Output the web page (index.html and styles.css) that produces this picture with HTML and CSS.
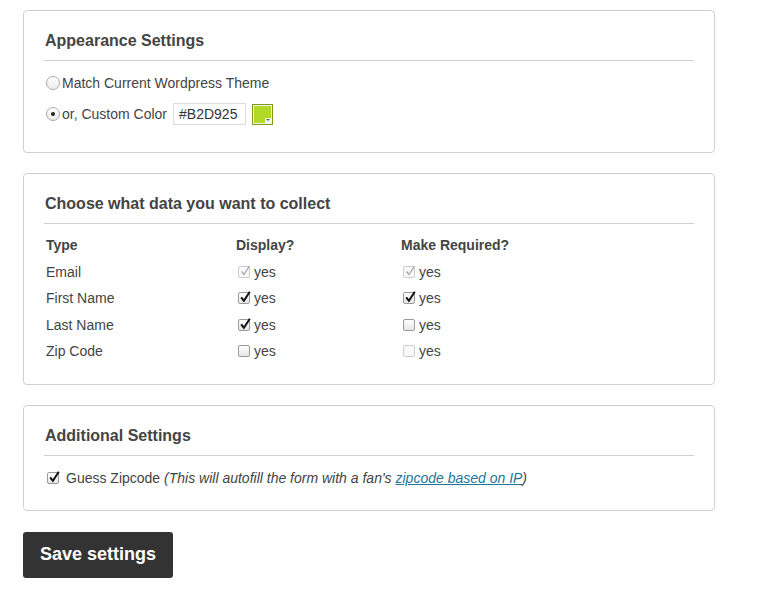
FILE: index.html
```html
<!DOCTYPE html>
<html>
<head>
<meta charset="utf-8">
<link rel="stylesheet" href="styles.css">
</head>
<body>
<div class="page">
  <section class="panel">
    <h2 class="panel-title">Appearance Settings</h2>
    <div class="panel-body">
      <label class="radio-row"><span class="radio"></span>Match Current Wordpress Theme</label>
      <label class="radio-row row2"><span class="radio on"><span class="dot"></span></span>or, Custom Color <span class="color-input">#B2D925</span><span class="swatch"><span class="swatch-fill"></span><span class="swatch-arrow"></span></span></label>
    </div>
  </section>

  <section class="panel">
    <h2 class="panel-title">Choose what data you want to collect</h2>
    <div class="grid">
      <div class="th">Type</div><div class="th">Display?</div><div class="th">Make Required?</div>
      <div class="td">Email</div>
      <div class="td"><span class="cb dis"><svg viewBox="0 0 14 14" width="14" height="14"><path d="M3.5 7.5 L6 10.5 L11.5 2" fill="none" stroke="#a6a6a6" stroke-width="1.3"/></svg></span>yes</div>
      <div class="td"><span class="cb dis"><svg viewBox="0 0 14 14" width="14" height="14"><path d="M3.5 7.5 L6 10.5 L11.5 2" fill="none" stroke="#a6a6a6" stroke-width="1.3"/></svg></span>yes</div>
      <div class="td">First Name</div>
      <div class="td"><span class="cb"><svg viewBox="0 0 14 14" width="14" height="14"><path d="M3.2 7.3 L5.9 10.8 L11.8 1.8" fill="none" stroke="#111" stroke-width="2"/></svg></span>yes</div>
      <div class="td"><span class="cb"><svg viewBox="0 0 14 14" width="14" height="14"><path d="M3.2 7.3 L5.9 10.8 L11.8 1.8" fill="none" stroke="#111" stroke-width="2"/></svg></span>yes</div>
      <div class="td">Last Name</div>
      <div class="td"><span class="cb"><svg viewBox="0 0 14 14" width="14" height="14"><path d="M3.2 7.3 L5.9 10.8 L11.8 1.8" fill="none" stroke="#111" stroke-width="2"/></svg></span>yes</div>
      <div class="td"><span class="cb"></span>yes</div>
      <div class="td">Zip Code</div>
      <div class="td"><span class="cb"></span>yes</div>
      <div class="td"><span class="cb dis"></span>yes</div>
    </div>
  </section>

  <section class="panel">
    <h2 class="panel-title">Additional Settings</h2>
    <div class="guess"><span class="cb"><svg viewBox="0 0 14 14" width="14" height="14"><path d="M3.2 7.3 L5.9 10.8 L11.8 1.8" fill="none" stroke="#111" stroke-width="2"/></svg></span><span class="gtext">Guess Zipcode <em>(This will autofill the form with a fan's <a href="#">zipcode based on IP</a>)</em></span></div>
  </section>

  <button class="save">Save settings</button>
</div>
</body>
</html>
```

FILE: styles.css
```css
html, body {
  margin: 0;
  padding: 0;
  background: #fff;
}
body {
  font-family: "Liberation Sans", Arial, sans-serif;
  color: #444;
  font-size: 14px;
}
.page {
  padding: 10px 0 0 23px;
  width: 692px;
  display: flex;
  flex-direction: column;
  gap: 20px;
}
.panel {
  border: 1px solid #cfcfcf;
  border-radius: 4px;
  padding: 20px 20px 0 20px;
}
.panel-title {
  margin: 0;
  font-size: 16px;
  line-height: 20px;
  font-weight: bold;
  color: #444;
  padding: 0 0 9px 1px;
  border-bottom: 1px solid #cfcfcf;
}
.panel-body {
  padding: 11px 0 27px 2px;
  display: flex;
  flex-direction: column;
  gap: 9px;
}
.radio-row {
  display: flex;
  align-items: center;
  height: 22px;
  color: #444;
}
.radio {
  width: 12px;
  height: 12px;
  border: 1px solid #a9a9a9;
  border-radius: 50%;
  background: linear-gradient(#fff, #ececec);
  margin-right: 2px;
  display: flex;
  align-items: center;
  justify-content: center;
  box-sizing: content-box;
}
.dot {
  width: 4px;
  height: 4px;
  border-radius: 50%;
  background: #222;
}
.color-input {
  margin-left: 6px;
  width: 66px;
  height: 20px;
  border: 1px solid #dcdcdc;
  padding-left: 5px;
  line-height: 20px;
  color: #333;
}
.swatch {
  position: relative;
  margin-left: 6px;
  border: 1px solid #7f9a1d;
  background: #f1f1f1;
  display: flex;
  padding: 1px;
  box-sizing: content-box;
  width: 17px;
  height: 17px;
}
.swatch-fill {
  flex: 1;
  background: #B2D925;
}
.swatch-arrow {
  position: absolute;
  right: 1px;
  bottom: 1px;
  width: 6px;
  height: 5px;
  background: #f4f4f4;
}
.swatch-arrow::after {
  content: "";
  position: absolute;
  left: 1px;
  top: 1px;
  border-left: 2px solid transparent;
  border-right: 2px solid transparent;
  border-top: 2px solid #666;
}
.grid {
  display: grid;
  grid-template-columns: 190px 165px 1fr;
  grid-auto-rows: 26.5px;
  padding: 8px 0 19px 2px;
  align-items: center;
}
.th {
  font-weight: bold;
  color: #444;
}
.td {
  display: flex;
  align-items: center;
  color: #444;
}
.cb {
  position: relative;
  width: 10px;
  height: 10px;
  border: 1px solid #9a9a9a;
  border-radius: 2px;
  background: linear-gradient(#fff, #e6e6e6);
  margin: 0 4px 0 2px;
  flex: none;
}
.cb.dis {
  border-color: #cdcdcd;
  background: #f8f8f8;
}
.cb svg {
  position: absolute;
  left: -1px;
  top: -3px;
}
.guess {
  display: flex;
  align-items: center;
  padding: 14px 0 24px 1px;
}
.guess .cb {
  margin-right: 7px;
}
.gtext em {
  font-style: italic;
}
.gtext a {
  color: #21759b;
  text-decoration: underline;
}
.save {
  align-self: flex-start;
  margin-top: 1px;
  width: 150px;
  height: 46px;
  background: #333;
  color: #fff;
  border: none;
  border-radius: 3px;
  font-family: "Liberation Sans", Arial, sans-serif;
  font-weight: bold;
  font-size: 18px;
  padding: 0;
}
```
